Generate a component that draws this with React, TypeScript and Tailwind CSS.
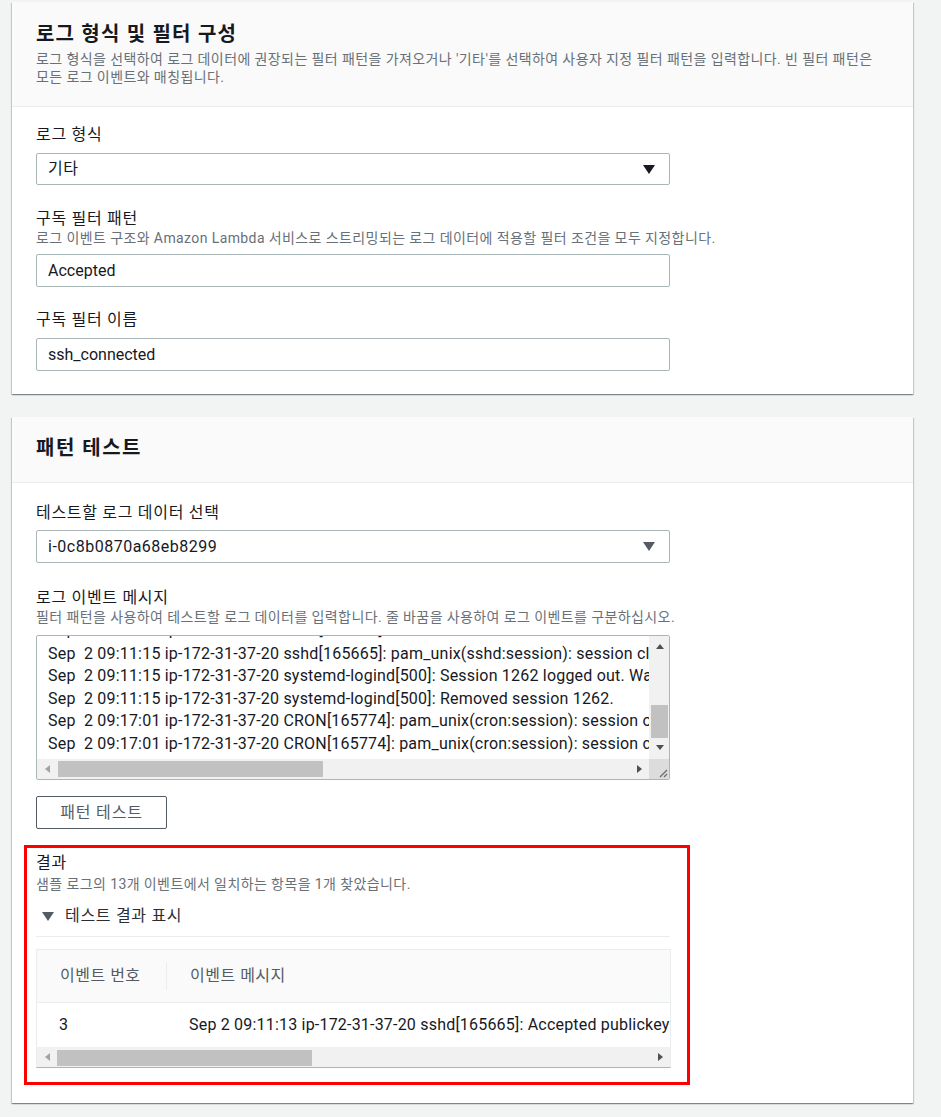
import React from "react";

const logLines = [
  "Sep  2 09:11:15 ip-172-31-37-20 sshd[165665]: Disconnected from user ubuntu 13.209.1.42 port 53218",
  "Sep  2 09:11:15 ip-172-31-37-20 sshd[165665]: pam_unix(sshd:session): session closed for user ubuntu",
  "Sep  2 09:11:15 ip-172-31-37-20 systemd-logind[500]: Session 1262 logged out. Waiting for processes to exit.",
  "Sep  2 09:11:15 ip-172-31-37-20 systemd-logind[500]: Removed session 1262.",
  "Sep  2 09:17:01 ip-172-31-37-20 CRON[165774]: pam_unix(cron:session): session opened for user root(uid=0) by (uid=0)",
  "Sep  2 09:17:01 ip-172-31-37-20 CRON[165774]: pam_unix(cron:session): session closed for user root",
];

function Caret({ color }: { color: string }) {
  return (
    <svg width="12" height="9" viewBox="0 0 12 9" className="shrink-0">
      <polygon points="0,0 12,0 6,9" fill={color} />
    </svg>
  );
}

function Arrow({ dir, color }: { dir: "up" | "down" | "left" | "right"; color: string }) {
  const pts: Record<string, string> = {
    up: "0,5 4,0 8,5",
    down: "0,0 8,0 4,5",
    left: "5,0 5,8 0,4",
    right: "0,0 0,8 5,4",
  };
  const vert = dir === "up" || dir === "down";
  return (
    <svg width={vert ? 8 : 5} height={vert ? 5 : 8} viewBox={vert ? "0 0 8 5" : "0 0 5 8"}>
      <polygon points={pts[dir]} fill={color} />
    </svg>
  );
}

function Label({ children }: { children: React.ReactNode }) {
  return <div className="text-[16px] leading-[20px] tracking-[0.7px] text-[#16191f]">{children}</div>;
}

function Desc({ children }: { children: React.ReactNode }) {
  return <div className="text-[14px] leading-[18px] tracking-[0.4px] text-[#687078]">{children}</div>;
}

function SelectBox({ value, caret, h }: { value: string; caret: string; h: string }) {
  return (
    <div className={`flex ${h} w-[634px] items-center justify-between rounded-[2px] border border-[#aab7b8] bg-white pl-[11px] pr-[14px] text-[16px] tracking-[0.5px] text-[#16191f]`}>
      <span>{value}</span>
      <Caret color={caret} />
    </div>
  );
}

function InputBox({ value }: { value: string }) {
  return (
    <div className="flex h-[33px] w-[634px] items-center rounded-[2px] border border-[#aab7b8] bg-white pl-[11px] text-[16px] text-[#16191f]">
      {value}
    </div>
  );
}

const cardShadow =
  "bg-white shadow-[0_1px_1px_0_rgba(0,28,36,0.3),1px_1px_1px_0_rgba(0,28,36,0.15),-1px_1px_1px_0_rgba(0,28,36,0.15)]";

export default function App() {
  return (
    <div className="min-h-[1117px] bg-[#f2f3f3] pb-[13px] pl-3 pr-7 pt-[2px] font-['Roboto','Noto_Sans_CJK_KR',sans-serif] text-[#16191f]">
      {/* Card 1 */}
      <section className={cardShadow}>
        <div className="border-b border-[#eaeded] bg-[#fafafa] px-6 pb-[20px] pt-[19px]">
          <h2 className="text-[20px] font-bold leading-[26px] tracking-[1.2px]">로그 형식 및 필터 구성</h2>
          <p className="mt-[3px] text-[14px] leading-[18px] tracking-[0.4px] text-[#687078]">
            로그 형식을 선택하여 로그 데이터에 권장되는 필터 패턴을 가져오거나 '기타'를 선택하여 사용자 지정 필터 패턴을 입력합니다. 빈 필터 패턴은
            <br />
            모든 로그 이벤트와 매칭됩니다.
          </p>
        </div>
        <div className="px-6 pb-[23px] pt-[18px]">
          <Label>로그 형식</Label>
          <div className="mt-2">
            <SelectBox value="기타" caret="#16191f" h="h-[32px]" />
          </div>

          <div className="mt-6">
            <Label>구독 필터 패턴</Label>
            <Desc>로그 이벤트 구조와 Amazon Lambda 서비스로 스트리밍되는 로그 데이터에 적용할 필터 조건을 모두 지정합니다.</Desc>
          </div>
          <div className="mt-[7px]">
            <InputBox value="Accepted" />
          </div>

          <div className="mt-[23px]">
            <Label>구독 필터 이름</Label>
          </div>
          <div className="mt-2">
            <InputBox value="ssh_connected" />
          </div>
        </div>
      </section>

      {/* Card 2 */}
      <section className={`mt-[23px] ${cardShadow}`}>
        <div className="border-b border-[#eaeded] bg-[#fafafa] px-6 pb-[20px] pt-[17px]">
          <h2 className="text-[20px] font-bold leading-[28px] tracking-[1.5px]">패턴 테스트</h2>
        </div>
        <div className="px-6 pb-[18px] pt-[20px]">
          <Label>테스트할 로그 데이터 선택</Label>
          <div className="mt-[7px]">
            <SelectBox value="i-0c8b0870a68eb8299" caret="#545b64" h="h-[33px]" />
          </div>

          <div className="mt-[25px]">
            <Label>로그 이벤트 메시지</Label>
            <Desc>필터 패턴을 사용하여 테스트할 로그 데이터를 입력합니다. 줄 바꿈을 사용하여 로그 이벤트를 구분하십시오.</Desc>
          </div>

          {/* Textarea */}
          <div className="mt-[9px] flex h-[145px] w-[634px] flex-col overflow-hidden rounded-[2px] border border-[#aab7b8] bg-white">
            <div className="flex h-[123px]">
              <div className="min-w-0 flex-1 overflow-hidden">
                <div className="mt-[-17px] whitespace-pre pl-[11px] text-[16px] leading-[22.5px] tracking-[0.2px] text-[#16191f]">
                  {logLines.map((l, i) => (
                    <div key={i} className={i === 1 ? "mt-[1px]" : ""}>{l}</div>
                  ))}
                </div>
              </div>
              <div className="flex w-[20px] flex-col bg-[#f1f1f1]">
                <div className="flex h-[20px] items-center justify-center pl-[1px]">
                  <Arrow dir="up" color="#505050" />
                </div>
                <div className="flex-1">
                  <div className="ml-[2px] mt-[49px] h-[33px] w-[17px] bg-[#c1c1c1]" />
                </div>
                <div className="flex h-[20px] items-center justify-center pb-[3px] pl-[1px]">
                  <Arrow dir="down" color="#505050" />
                </div>
              </div>
            </div>
            <div className="flex h-[20px] bg-[#f1f1f1]">
              <div className="flex w-[20px] items-center justify-center">
                <Arrow dir="left" color="#a3a3a3" />
              </div>
              <div className="flex-1">
                <div className="ml-[1px] mt-[2px] h-[16px] w-[265px] bg-[#c1c1c1]" />
              </div>
              <div className="flex w-[20px] items-center justify-center">
                <Arrow dir="right" color="#505050" />
              </div>
              <div className="flex w-[20px] items-end justify-end bg-[#dcdcdc] pb-[1px] pr-[1px]">
                <svg width="10" height="10" viewBox="0 0 10 10">
                  <line x1="9" y1="2" x2="2" y2="9" stroke="#6b6b6b" strokeWidth="1.2" />
                  <line x1="9" y1="6" x2="6" y2="9" stroke="#6b6b6b" strokeWidth="1.2" />
                </svg>
              </div>
            </div>
          </div>

          <button className="mt-4 flex h-[33px] w-[131px] items-center justify-center rounded-[2px] border border-[#545b64] bg-white text-[16px] tracking-[0.8px] text-[#545b64]">
            패턴 테스트
          </button>

          {/* Result (highlighted) */}
          <div className="-ml-3 mt-4 w-[666px] border-[3px] border-[#ff0000] pb-[14px] pl-[9px] pr-[17px] pt-[5px]">
            <Label>결과</Label>
            <div className="mt-[2px]">
              <Desc>샘플 로그의 13개 이벤트에서 일치하는 항목을 1개 찾았습니다.</Desc>
            </div>
            <div className="mt-[11px] flex h-[24px] items-center gap-[11px] pl-[6px]">
              <Caret color="#545b64" />
              <span className="text-[16px] tracking-[0.7px] text-[#2a2e33]">테스트 결과 표시</span>
            </div>
            <div className="mt-[8px] h-px w-[634px] bg-[#eaeded]" />

            {/* Table */}
            <div className="mt-[12px] w-[635px] overflow-hidden border border-[#eaeded] border-b-[#aab7b8] bg-white">
              <div className="flex h-[53px] items-center border-b border-[#eaeded] bg-[#fafafa] text-[16px] tracking-[0.5px] text-[#545b64]">
                <div className="w-[129px] pl-[23px]">이벤트 번호</div>
                <div className="h-[27px] w-px bg-[#eaeded]" />
                <div className="pl-[23px]">이벤트 메시지</div>
              </div>
              <div className="flex h-[44px] items-center whitespace-nowrap text-[16px] tracking-[0.2px] text-[#16191f]">
                <div className="w-[130px] shrink-0 pl-[22px]">3</div>
                <div className="min-w-0 flex-1 overflow-hidden pl-[22px]">
                  Sep 2 09:11:13 ip-172-31-37-20 sshd[165665]: Accepted publickey for ubuntu from 13.209.1.42 port 53218 ssh2: RSA SHA256:xyz
                </div>
              </div>
              <div className="flex h-[20px] bg-[#f1f1f1]">
                <div className="flex w-[20px] items-center justify-center">
                  <Arrow dir="left" color="#a3a3a3" />
                </div>
                <div className="flex-1">
                  <div className="mt-[3px] h-[16px] w-[255px] bg-[#c1c1c1]" />
                </div>
                <div className="flex w-[20px] items-center justify-center">
                  <Arrow dir="right" color="#505050" />
                </div>
              </div>
            </div>
          </div>
        </div>
      </section>
    </div>
  );
}
